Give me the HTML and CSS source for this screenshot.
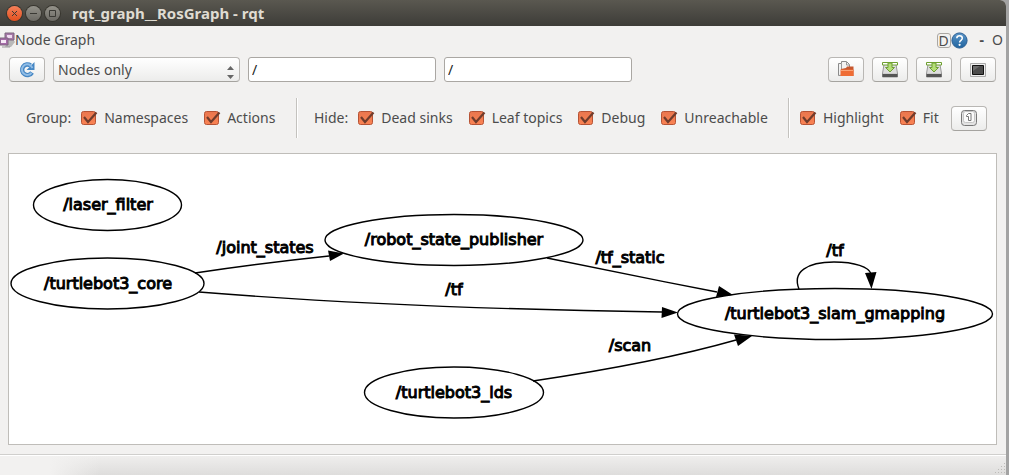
FILE: index.html
```
<!DOCTYPE html>
<html lang="en">
<head>
<meta charset="utf-8">
<title>rqt_graph__RosGraph - rqt</title>
<link rel="stylesheet" href="styles.css">
</head>
<body>
<div class="window">
  <header class="titlebar">
    <button class="wm wm-close" aria-label="Close"><svg width="15" height="15" viewBox="0 0 15 15"><path d="M5 5l5 5M10 5l-5 5"/></svg></button>
    <button class="wm" aria-label="Minimize"><svg width="15" height="15" viewBox="0 0 15 15"><path d="M4 7.500h7"/></svg></button>
    <button class="wm" aria-label="Maximize"><svg width="15" height="15" viewBox="0 0 15 15"><path d="M4.500 4.500h6v6h-6z"/></svg></button>
    <h1 class="title">rqt_graph__RosGraph - rqt</h1>
  </header>

  <div class="dock">
    <svg class="dock-icon" width="15" height="16" viewBox="0 0 15 16">
      <path d="M8 9l5-2 2 3-4 5H5z" fill="#b9b9b9"/>
      <path d="M5 1h9v7H5z" fill="#a678a8" stroke="#7d667f"/><path d="M7 3h5v3H7z" fill="#efdcf0"/>
      <path d="M0 6h8v7H0z" fill="#a56aa8" stroke="#7d667f"/><path d="M1 8h5v3H1z" fill="#f6e9f6"/>
      <path d="M2 15h8" stroke="#999"/>
    </svg>
    <h2 class="dock-title">Node Graph</h2>
    <button class="dock-btn dock-d">D</button>
    <button class="dock-btn" aria-label="Help"><svg width="17" height="17" viewBox="0 0 17 17">
      <defs><linearGradient id="help" x2="0" y2="1"><stop stop-color="#5b95c8"/><stop offset="1" stop-color="#20649f"/></linearGradient></defs>
      <circle cx="8.500" cy="8.500" r="7.600" fill="url(#help)" stroke="#2b5f94"/>
      <path d="M5.800 6.300C5.800 3 11.300 3 11.300 6.300c0 2-2.700 2-2.700 4.200" fill="none" stroke="#fff" stroke-width="1.500"/><circle cx="8.600" cy="12.800" r="1.100" fill="#fff"/>
    </svg></button>
    <button class="dock-btn dock-min">-</button>
    <button class="dock-btn dock-float">O</button>
  </div>

  <div class="toolbar">
    <button class="tool" aria-label="Refresh"><svg width="18" height="18" viewBox="0 0 18 18">
      <path d="M14 11.500A5.300 5.300 0 1 1 12.600 4.500" fill="none" stroke="#4687c4" stroke-width="4.400"/>
      <path d="M16.500 1v8H8.500z" fill="#4687c4"/>
      <path d="M13.500 11.800A5.300 5.300 0 1 1 12.600 4.500L14.500 7" fill="none" stroke="#91bde6" stroke-width="2"/>
    </svg></button>
    <select class="combo" aria-label="Graph type"><option>Nodes only</option></select>
    <input class="field" type="text" value="/" aria-label="Namespace filter">
    <input class="field" type="text" value="/" aria-label="Topic filter">
    <div class="actions">
      <button class="tool" aria-label="Open"><svg width="18" height="18" viewBox="0 0 18 18">
        <path d="M1.500 14.500v-12h3v-2h5l3 3v10z" fill="#f2f2f2" stroke="#8b8b8b"/><path d="M4.500 3v10M9.500 1v3h3" fill="none" stroke="#999"/>
        <path d="M4 8l5-1 1-1.500h6.500V15H4z" fill="#c6572e"/><path d="M3.500 8.500h13V15h-13z" fill="#ef6d35"/><path d="M4 9.500h12" stroke="#fba477"/>
      </svg></button>
      <button class="tool" aria-label="Save DOT"><svg width="18" height="18" viewBox="0 0 18 18">
        <path d="M3 3.500h12l1.500 9v3.500h-15v-3.500z" fill="#ddd" stroke="#999"/><path d="M1.500 12.500h15V16h-15z" fill="#555"/><path d="M2 12.500h14" stroke="#ccc"/>
        <path d="M1.500 1.500h15v2.500h-15z" fill="#fff" stroke="#6ea02f"/><path d="M7 2v4.500H4.500L9 11l4.500-4.500H11V2z" fill="#b5df77" stroke="#6f9e35"/>
      </svg></button>
      <button class="tool" aria-label="Save SVG"><svg width="18" height="18" viewBox="0 0 18 18">
        <path d="M3 3.500h12l1.500 9v3.500h-15v-3.500z" fill="#ddd" stroke="#999"/><path d="M1.500 12.500h15V16h-15z" fill="#555"/><path d="M2 12.500h14" stroke="#ccc"/>
        <path d="M1.500 1.500h15v2.500h-15z" fill="#fff" stroke="#6ea02f"/><path d="M7 2v4.500H4.500L9 11l4.500-4.500H11V2z" fill="#b5df77" stroke="#6f9e35"/>
      </svg></button>
      <button class="tool" aria-label="Save image"><svg width="18" height="18" viewBox="0 0 18 18">
        <path d="M1.500 2.500h15v13h-15z" fill="#eee" stroke="#aaa"/><path d="M3.500 4.500h11v9h-11z" fill="#4b4b4b" stroke="#111"/><path d="M4 5h7l-7 5z" fill="#6b6b6b"/>
      </svg></button>
    </div>
  </div>

  <div class="options">
    <fieldset class="group group-a">
      <span>Group:</span>
      <label><input type="checkbox" checked>Namespaces</label>
      <label><input type="checkbox" checked>Actions</label>
    </fieldset>
    <fieldset class="group group-b">
      <span>Hide:</span>
      <label><input type="checkbox" checked>Dead sinks</label>
      <label><input type="checkbox" checked>Leaf topics</label>
      <label><input type="checkbox" checked>Debug</label>
      <label><input type="checkbox" checked>Unreachable</label>
    </fieldset>
    <fieldset class="group group-c">
      <label><input type="checkbox" checked>Highlight</label>
      <label><input type="checkbox" checked>Fit</label>
      <button class="tool" aria-label="Fit in view"><svg width="18" height="18" viewBox="0 0 18 18">
        <rect x="1.500" y="1.500" width="15" height="15" rx="3" fill="#e3e3e3" stroke="#777"/><rect x="3.500" y="2.500" width="11" height="11" rx="2" fill="#fafafa" stroke="#c5c5c5"/>
        <path d="M6.500 6.500l2-2h2.500v7H8.500V7.500h-2z" fill="#fff" stroke="#777"/>
      </svg></button>
    </fieldset>
  </div>

  <main class="canvas">
    <svg class="graph" viewBox="9 154 987 290" role="img" aria-label="ROS node graph">
      <g class="edges">
        <path d="M195 273Q262 263 329 256"/>
        <path d="M199 292C350 304 520 310 662 312"/>
        <path d="M547 258C600 269 660 281 717 292"/>
        <path d="M533 381C600 371 680 356 736 340"/>
        <path d="M799 289C792 272 807 262 834 262C855 262 869 267 871 274"/>
      </g>
      <g class="arrows">
        <path d="M328 250.500L344 253.500L330 261z"/>
        <path d="M662 307L678 312.500L661.500 318z"/>
        <path d="M719 286L733 295L716 297z"/>
        <path d="M734 334.500L752 336L738 346z"/>
        <path d="M865 273L876.500 272L871.500 289z"/>
      </g>
      <g class="nodes">
        <ellipse cx="107.500" cy="205" rx="74" ry="25.500"/>
        <ellipse cx="107.500" cy="283.500" rx="96.500" ry="25.500"/>
        <ellipse cx="454" cy="240" rx="129" ry="25.500"/>
        <ellipse cx="835" cy="314" rx="157.500" ry="25.500"/>
        <ellipse cx="454" cy="392.500" rx="89.500" ry="25.500"/>
      </g>
      <g class="names">
        <text x="108" y="210">/laser_filter</text>
        <text x="108" y="289">/turtlebot3_core</text>
        <text x="454" y="245">/robot_state_publisher</text>
        <text x="835" y="319">/turtlebot3_slam_gmapping</text>
        <text x="454" y="398">/turtlebot3_lds</text>
        <text x="265" y="253">/joint_states</text>
        <text x="454" y="295">/tf</text>
        <text x="630" y="263">/tf_static</text>
        <text x="835" y="256">/tf</text>
        <text x="630" y="351">/scan</text>
      </g>
    </svg>
  </main>

  <footer class="status">
    <svg width="12" height="12" viewBox="0 0 12 12" fill="#bcbbb8"><path d="M10 0h1v1h-1zM7 3h1v1H7zM10 3h1v1h-1zM4 6h1v1H4zM7 6h1v1H7zM10 6h1v1h-1zM1 9h1v1H1zM4 9h1v1H4zM7 9h1v1H7zM10 9h1v1h-1z"/></svg>
  </footer>
</div>
</body>
</html>
```
FILE: styles.css
```
* { box-sizing: border-box; }
body {
  margin: 0;
  padding-right: 3px;
  background: #a3a3a3;
  font: 14px/20px "Noto Sans", "Open Sans", sans-serif;
  color: #4c4c4c;
}
button, input, select { font: inherit; color: inherit; margin: 0; }
button { padding: 0; }
svg { display: block; }
.window {
  display: flex;
  flex-direction: column;
  min-height: 100vh;
  background: #f2f1f0;
  border-top-right-radius: 6px;
  overflow: hidden;
}
.titlebar {
  display: flex;
  align-items: center;
  gap: 4px;
  height: 26px;
  padding-left: 7px;
  background: linear-gradient(#5a5850, #3d3c38);
}
.wm {
  width: 15px;
  height: 15px;
  border: 0;
  border-radius: 50%;
  background: linear-gradient(#94928a, #6c6a64);
  box-shadow: 0 0 0 1px #38362f;
}
.wm path { fill: none; stroke: #3a3934; }
.wm-close { background: linear-gradient(#f58059, #e2501f); }
.title {
  margin: 0 0 0 8px;
  font-size: 15px;
  font-weight: 700;
  color: #dfdbd2;
}
.dock { display: flex; align-items: center; height: 28px; padding-right: 3px; }
.dock-title { flex: 1; margin: 0; font-size: 14px; font-weight: 400; }
.dock-btn { border: 0; background: none; line-height: 16px; }
.dock-d { width: 14px; height: 15px; border: 1px solid #aaa7a3; border-radius: 3px; line-height: 13px; }
.dock-min { margin-left: 12px; font-weight: 700; }
.dock-float { margin-left: 8px; }
.toolbar { display: flex; align-items: center; gap: 8px; padding: 3px 10px 3px 9px; }
.tool {
  display: flex;
  align-items: center;
  justify-content: center;
  width: 36px;
  height: 25px;
  border: 1px solid #b9b7b4;
  border-bottom-color: #a5a39f;
  border-radius: 4px;
  background: linear-gradient(#fff, #ececeb);
}
.combo {
  appearance: none;
  flex: 0 1 187px;
  height: 25px;
  padding: 0 4px;
  border: 1px solid #b9b7b4;
  border-bottom-color: #a5a39f;
  border-radius: 4px;
  background:
    url("data:image/svg+xml,%3Csvg xmlns='http://www.w3.org/2000/svg' width='7' height='14' fill='%23666'%3E%3Cpath d='M0 4l3.500-4L7 4zM0 9h7l-3.500 4z'/%3E%3C/svg%3E") no-repeat right 5px bottom 1px,
    linear-gradient(#fff, #ececeb);
}
.field {
  flex: 0 1 188px;
  min-width: 0;
  height: 25px;
  padding: 0 3px;
  border: 1px solid #aaa7a3;
  border-radius: 3px;
  background: #fff;
  color: #222;
}
.actions { display: flex; gap: 8px; margin-left: auto; }
.options { display: flex; padding: 13px 0 15px; }
.group {
  display: flex;
  align-items: center;
  gap: 10px;
  min-width: 0;
  height: 40px;
  margin: 0;
  padding: 0;
  border: 0;
}
.group + .group { border-left: 1px solid #c4c2be; box-shadow: inset 1px 0 #fff; }
.group-a { flex: 0 1 296px; padding-left: 26px; }
.group-b { flex: 0 1 492px; padding-left: 17px; }
.group-c { flex: 0 1 199px; padding-left: 11px; }
.group .tool { margin-left: auto; }
.group label { display: flex; align-items: center; gap: 6px; white-space: nowrap; }
.group label + label { margin-left: 6px; }
.group input {
  appearance: none;
  width: 17px;
  height: 16px;
  background: url("data:image/svg+xml,%3Csvg xmlns='http://www.w3.org/2000/svg' width='17' height='16'%3E%3Cdefs%3E%3ClinearGradient id='a' x2='0' y2='1'%3E%3Cstop stop-color='%23e9764e'/%3E%3Cstop offset='1' stop-color='%23fa8353'/%3E%3C/linearGradient%3E%3C/defs%3E%3Crect x='.5' y='1.500' width='14' height='13' rx='2' fill='url(%23a)' stroke='%23b65335'/%3E%3Cpath d='M3 7l4 5 8.500-9.500' fill='none' stroke='%23703c2c' stroke-width='2.200'/%3E%3C/svg%3E");
}
.canvas { margin: 0 9px 0 8px; border: 1px solid #bfbdb9; background: #fff; }
.graph { width: 100%; height: auto; }
.edges, .nodes { fill: none; stroke: #000; stroke-width: 1.4px; }
.names {
  font: 16px "DejaVu Sans", sans-serif;
  text-anchor: middle;
  stroke: #000;
  stroke-width: 1px;
}
.status {
  display: flex;
  flex: 1;
  align-items: flex-end;
  justify-content: flex-end;
  margin-top: 9px;
  border-top: 1px solid #d0cfcd;
  background:
    linear-gradient(90deg, #f2f1f0 50px, transparent 100px),
    linear-gradient(#f0efee, #dedddc);
  box-shadow: inset 0 1px #fff;
}
```
